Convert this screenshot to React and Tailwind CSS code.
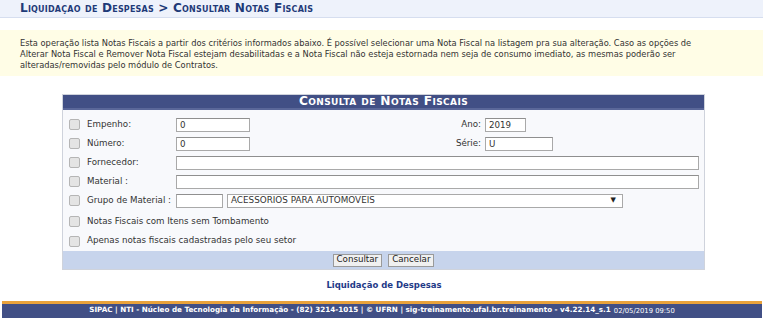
import React from "react";

const font = { fontFamily: '"DejaVu Sans", Verdana, sans-serif' };

function Cb() {
  return (
    <span className="inline-block w-[11px] h-[11px] rounded-[2px] border border-[#b5b5b5] bg-[#e4e4e4] shrink-0" />
  );
}

function Inp({ w, v }) {
  return (
    <div
      className={`h-[14px] border border-[#a9a9a9] border-t-[#8f8f8f] bg-white text-[8.7px] leading-[12px] pl-[3px] text-[#333] ${w}`}
    >
      {v}
    </div>
  );
}

export default function App() {
  return (
    <div className="w-[768px] h-[327px] bg-white text-[#222] overflow-hidden" style={font}>
      {/* Title bar */}
      <div className="w-[763px] h-[18px] bg-[#eef2fb] border-b border-[#d6deef] pl-[20px] flex items-center">
        <span className="text-[12.1px] font-bold text-[#1f3a78] tracking-[0.2px]" style={{ fontVariant: "small-caps" }}>
          Liquidaçao de Despesas &gt; Consultar Notas Fiscais
        </span>
      </div>

      {/* Notice */}
      <div className="w-[763px] mt-[12px] h-[46px] bg-[#fffde6] pl-[20px] pt-[8px] text-[8.3px] leading-[11px] text-[#333] whitespace-nowrap">
        Esta operação lista Notas Fiscais a partir dos critérios informados abaixo. É possível selecionar uma Nota Fiscal na listagem pra sua alteração. Caso as opções de
        <br />
        Alterar Nota Fiscal e Remover Nota Fiscal estejam desabilitadas e a Nota Fiscal não esteja estornada nem seja de consumo imediato, as mesmas poderão ser
        <br />
        alteradas/removidas pelo módulo de Contratos.
      </div>

      {/* Form */}
      <div className="ml-[62px] mt-[18px] w-[643px] border border-[#cfd3dc] bg-[#f8f9fc]">
        <div className="h-[15px] bg-[#414f85] flex items-center justify-center border-b-2 border-[#5a6799]">
          <span className="text-white font-bold text-[12.2px] tracking-[0.4px]" style={{ fontVariant: "small-caps" }}>
            Consulta de Notas Fiscais
          </span>
        </div>
        <div className="pt-[5px] text-[8.7px] text-[#333]">
          <div className="h-[19px] flex items-center">
            <div className="w-[24px] pl-[6px] flex"><Cb /></div>
            <div className="w-[89px]">Empenho:</div>
            <Inp w="w-[74px]" v="0" />
            <div className="w-[235px] text-right pr-[4px]">Ano:</div>
            <Inp w="w-[41px]" v="2019" />
          </div>
          <div className="h-[19px] flex items-center">
            <div className="w-[24px] pl-[6px] flex"><Cb /></div>
            <div className="w-[89px]">Número:</div>
            <Inp w="w-[74px]" v="0" />
            <div className="w-[235px] text-right pr-[4px]">Série:</div>
            <Inp w="w-[68px]" v="U" />
          </div>
          <div className="h-[19px] flex items-center">
            <div className="w-[24px] pl-[6px] flex"><Cb /></div>
            <div className="w-[89px]">Fornecedor:</div>
            <Inp w="w-[523px]" v="" />
          </div>
          <div className="h-[19px] flex items-center">
            <div className="w-[24px] pl-[6px] flex"><Cb /></div>
            <div className="w-[89px]">Material :</div>
            <Inp w="w-[523px]" v="" />
          </div>
          <div className="h-[19px] flex items-center">
            <div className="w-[24px] pl-[6px] flex"><Cb /></div>
            <div className="w-[89px]">Grupo de Material :</div>
            <Inp w="w-[47px]" v="" />
            <div className="ml-[4px] w-[396px] h-[14px] border border-[#a9a9a9] bg-white flex items-center justify-between pl-[3px] pr-[6px] text-[8.8px]">
              <span>ACESSORIOS PARA AUTOMOVEIS</span>
              <span className="text-[7px] text-[#222]">▼</span>
            </div>
          </div>
          <div className="h-[22px] pt-[1px] flex items-center">
            <div className="w-[24px] pl-[6px] flex"><Cb /></div>
            <div>Notas Fiscais com Itens sem Tombamento</div>
          </div>
          <div className="h-[18px] flex items-center">
            <div className="w-[24px] pl-[6px] flex"><Cb /></div>
            <div>Apenas notas fiscais cadastradas pelo seu setor</div>
          </div>
        </div>
        <div className="mt-[1px] h-[18px] bg-[#c7d4ec] flex items-center justify-center gap-[6px] text-[8.7px]">
          <div className="h-[13px] px-[3px] border border-[#9a9a9a] bg-[#f0f0f0] flex items-center text-[#222]">Consultar</div>
          <div className="h-[13px] px-[3px] border border-[#9a9a9a] bg-[#f0f0f0] flex items-center text-[#222]">Cancelar</div>
        </div>
      </div>

      {/* Link */}
      <div className="mt-[9px] text-center text-[8.5px] font-bold text-[#1f3a88]">Liquidação de Despesas</div>

      {/* Footer */}
      <div className="mt-[9px] ml-[2px] w-[760px] h-[17px] border-t-[3px] border-[#e9a23b] bg-[#414f85] flex items-center justify-center text-white font-bold text-[7.2px]">
        <span>SIPAC | NTI - Núcleo de Tecnologia da Informação - (82) 3214-1015 | © UFRN | sig-treinamento.ufal.br.treinamento - v4.22.14_s.1</span>
        <span className="ml-[3px] text-[6.8px] font-normal">02/05/2019 09:50</span>
      </div>
    </div>
  );
}
